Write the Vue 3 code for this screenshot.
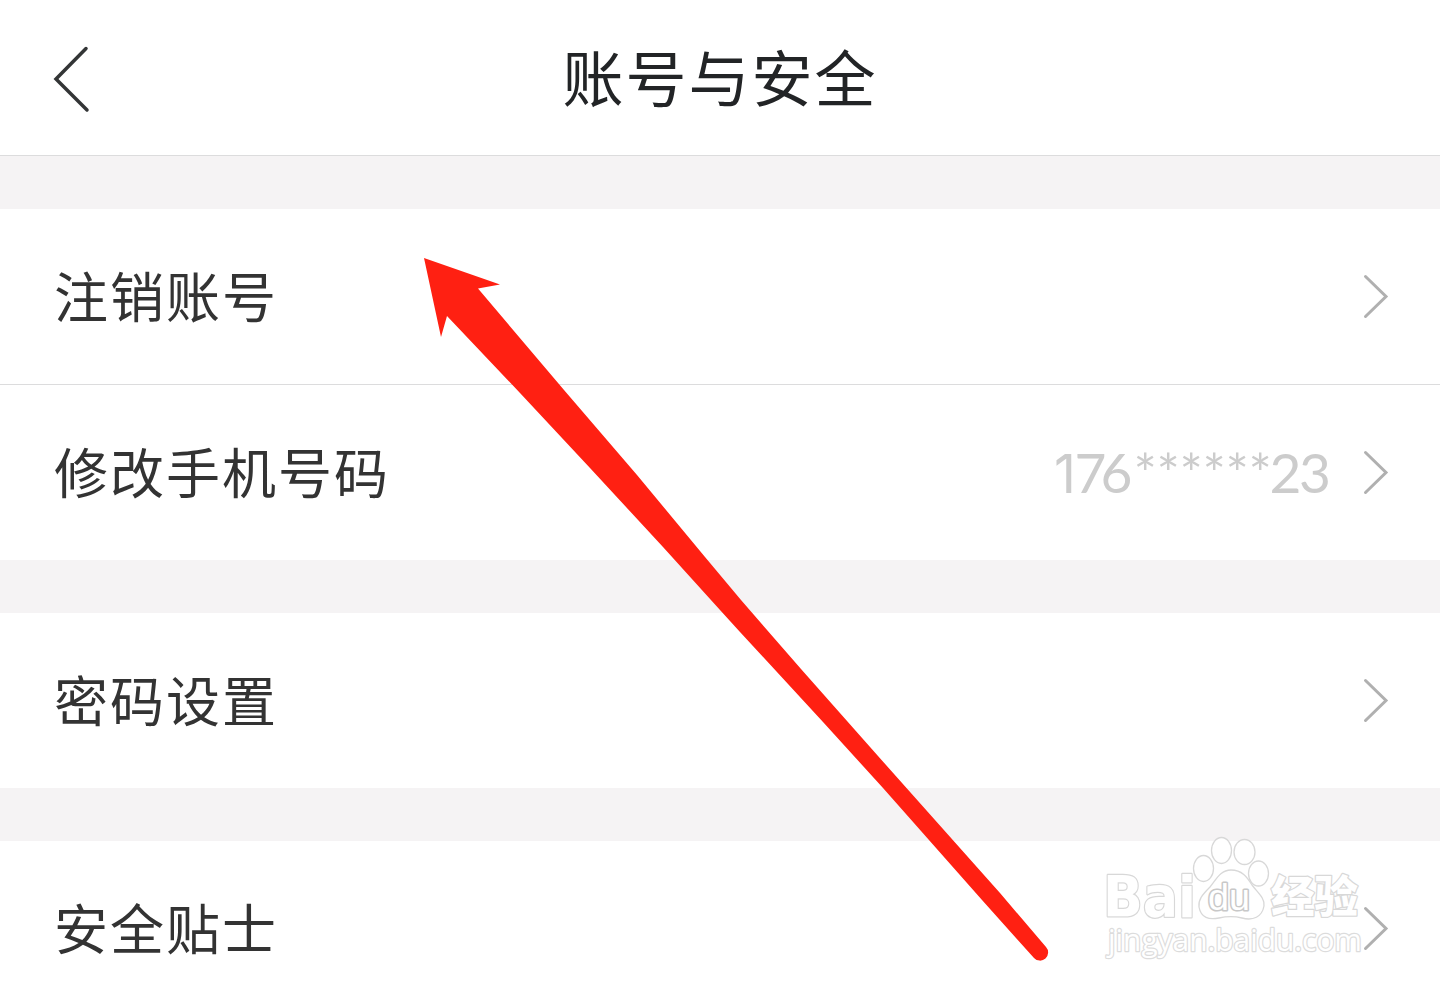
<script setup>
const groups = [
  [{ label: '注销账号' }, { label: '修改手机号码', phone: true }],
  [{ label: '密码设置' }],
  [{ label: '安全贴士' }],
]
</script>

<template>
  <div class="page">
    <header class="header">
      <svg class="back" width="40" height="70" viewBox="0 0 40 70"><path d="M34 4.500 4 35 35 66" /></svg>
      <h1>账号与安全</h1>
    </header>
    <section v-for="(group, i) in groups" :key="i" class="group">
      <div v-for="row in group" :key="row.label" class="row">
        <span class="label">{{ row.label }}</span>
        <svg v-if="row.phone" class="phone" width="290" height="80" viewBox="0 0 290 80">
          <text y="60" x="10 30.500 56.500"><tspan class="one">1</tspan>76</text>
          <text y="60" x="89.500 112.500 135.500 158.500 181.500 204.500">******</text>
          <text y="60" x="225.500 255">23</text>
        </svg>
        <svg class="chevron" width="28" height="48" viewBox="0 0 28 48"><path d="M3.500 4.500 24 24.500 3.500 44.500" /></svg>
      </div>
    </section>
    <svg class="arrow" width="1440" height="991" viewBox="0 0 1440 991">
      <path d="M424 258 500 284.500 478 288.500 564 390 637 475 705 557 741 600 801 669 878 756 1000 893 1046 947A8 8 0 0 1 1034 958L982 900 883 788 823 722 740 632 720 610 663 547 590 468 520 393 447 316 441 337Z" />
    </svg>
    <svg class="watermark" width="290" height="150" viewBox="0 0 290 150">
      <text class="brand" x="3" y="86.500" textLength="93" lengthAdjust="spacingAndGlyphs">Bai</text>
      <ellipse cx="103.500" cy="38.500" rx="10" ry="13" />
      <ellipse cx="121.500" cy="20.500" rx="10" ry="13" />
      <ellipse cx="144.500" cy="22" rx="10.500" ry="12.500" />
      <ellipse cx="158.500" cy="43.500" rx="10" ry="12.500" />
      <path d="M131 40C120 40 116 50 110 57C102 65 98 70 99 77C101 88 109 90 119 88C128 86 134 86 142 88C153 91 162 87 164 76C165 68 158 63 152 55C147 47 142 40 131 40Z" />
      <text class="du" x="108" y="79.500" textLength="42" lengthAdjust="spacingAndGlyphs">du</text>
      <text class="cn" x="171" y="83" textLength="87" lengthAdjust="spacingAndGlyphs">经验</text>
      <text class="url" x="8" y="121" textLength="254" lengthAdjust="spacingAndGlyphs">jingyan.baidu.com</text>
    </svg>
  </div>
</template>

<style>
body { margin: 0; }
</style>

<style scoped>
.page {
  position: relative;
  width: 1440px;
  height: 991px;
  overflow: hidden;
  background: #f5f3f4;
  font-family: "Noto Sans CJK SC", sans-serif;
}
.header {
  box-sizing: border-box;
  height: 156px;
  display: grid;
  grid-template-columns: 90px 1fr 90px;
  align-items: center;
  background: #fff;
  border-bottom: 1px solid #dcdcdd;
}
.back { margin-left: 52px; margin-top: 2px; }
.back path { fill: none; stroke: #333536; stroke-width: 3.5; stroke-linecap: round; }
h1 {
  margin: 0 0 4px;
  text-align: center;
  font-size: 61px;
  font-weight: 400;
  letter-spacing: 2px;
  line-height: 90px;
  color: #222426;
}
.group { margin-top: 53px; background: #fff; }
.row {
  box-sizing: border-box;
  height: 175px;
  padding: 0 50px 0 54px;
  display: flex;
  align-items: center;
}
.row + .row { height: 176px; border-top: 1px solid #dcdcdd; }
.label {
  flex: 1;
  margin-bottom: 4px;
  font-size: 54px;
  letter-spacing: 2px;
  line-height: 80px;
  color: #333;
}
.phone { margin-right: 28px; }
.phone text { font-family: Lato, sans-serif; font-size: 55px; fill: #ccc; }
.phone .one { font-family: Inter, sans-serif; font-size: 54px; font-weight: 400; }
.chevron { margin-bottom: 1px; }
.chevron path { fill: none; stroke: #b0b0b0; stroke-width: 3; stroke-linecap: round; }
.arrow { position: absolute; left: 0; top: 0; }
.arrow path { fill: #ff2012; }
.watermark { position: absolute; left: 1100px; top: 830px; }
.watermark * { fill: #fff; stroke: #d8d8d8; stroke-width: 1.3; }
.watermark text { paint-order: stroke; stroke-width: 2.500; stroke-linejoin: round; }
.watermark .brand { font: 700 57px "DejaVu Sans", sans-serif; }
.watermark .du { font: 400 36px "Liberation Sans", sans-serif; stroke: #c8c8c8; stroke-width: 3; }
.watermark .cn { font: 900 44px "Noto Sans CJK SC", sans-serif; }
.watermark .url { font: 400 31px "Open Sans", sans-serif; stroke: #dcdcdc; }
</style>
